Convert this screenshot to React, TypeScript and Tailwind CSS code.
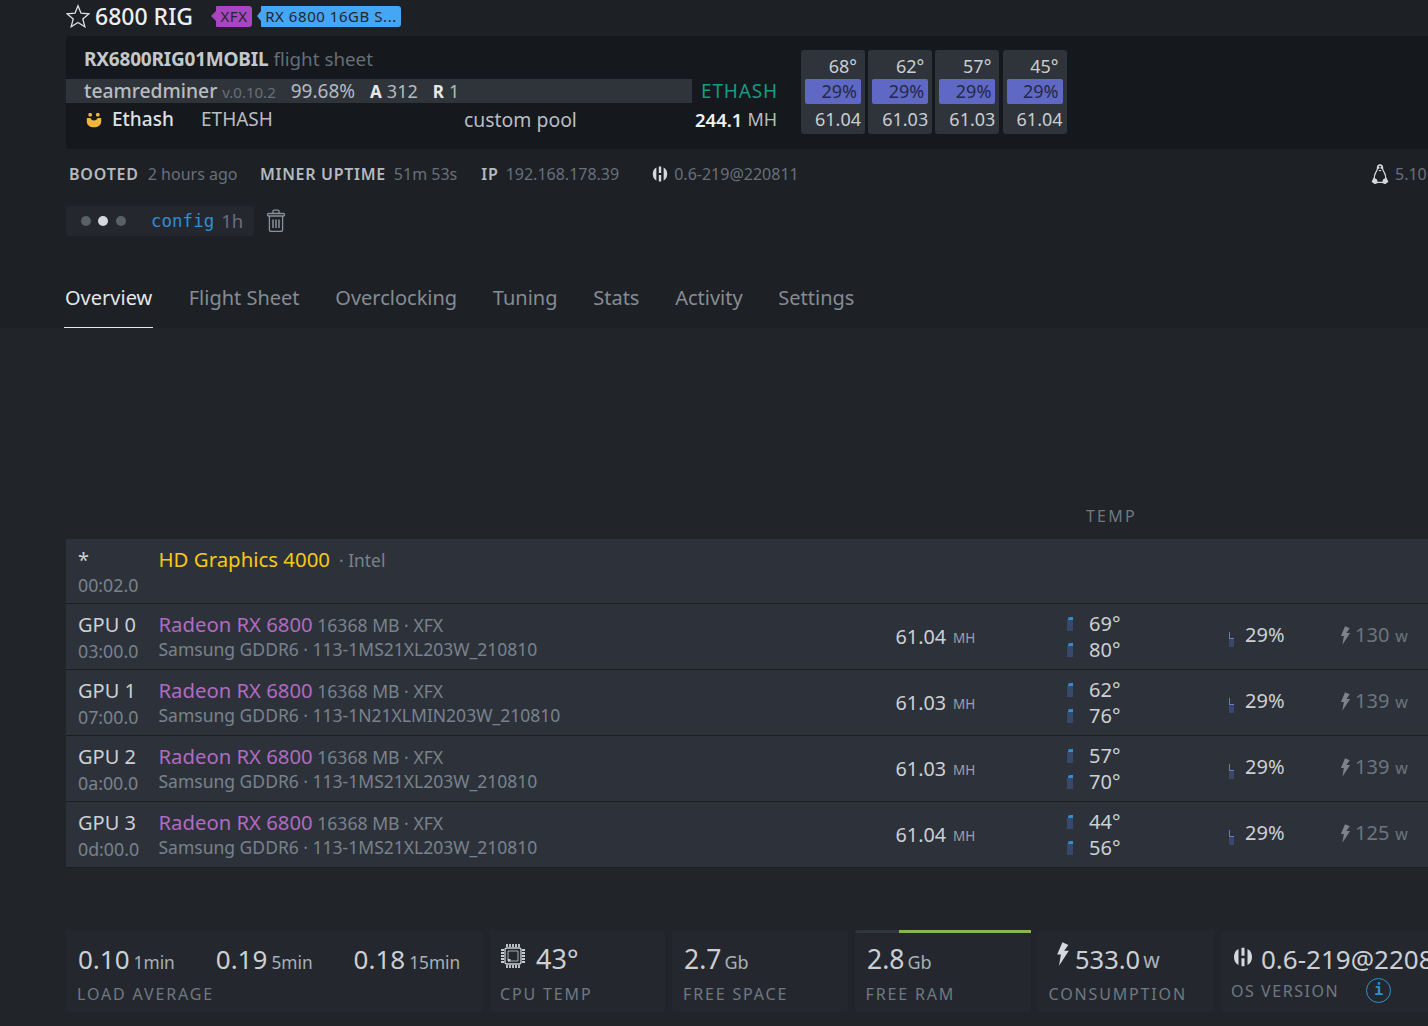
import React from "react";

const LogoH = ({ className }: { className: string }) => (
  <svg viewBox="0 0 16 16" className={className} fill="currentColor">
    <path d="M4.4 1.6C2.2 2.6.8 4.8.8 8s1.4 5.4 3.6 6.4Z" />
    <path d="M6.8.6h2.4V7H6.8ZM6.8 9h2.4v6.4H6.8Z" />
    <path d="M11.6 1.6c2.2 1 3.6 3.2 3.6 6.4s-1.4 5.4-3.6 6.4Z" />
  </svg>
);

const Bolt = ({ className }: { className: string }) => (
  <svg viewBox="0 0 12 20" className={className} fill="currentColor">
    <path d="M5.5 0 1 10.5h3.2L2.6 20 11 7.2H7L10.6 2.2 5.5 0Z" />
  </svg>
);

const Chip = () => (
  <svg viewBox="0 0 26 26" className="w-[26px] h-[26px] text-[#c9ced4]" fill="none" stroke="currentColor">
    <rect x="5" y="5" width="16" height="16" rx="2" strokeWidth="1.3" />
    <path d="M8 8h10v10H8Z" strokeWidth=".8" />
    <rect x="8" y="16" width="2.5" height="2.5" fill="currentColor" stroke="none" />
    <path d="M7 1v3M10 1v3M13 1v3M16 1v3M19 1v3M7 22v3M10 22v3M13 22v3M16 22v3M19 22v3M1 7h3M1 10h3M1 13h3M1 16h3M1 19h3M22 7h3M22 10h3M22 13h3M22 16h3M22 19h3" strokeWidth="1.8" />
  </svg>
);

const Tux = () => (
  <svg viewBox="0 0 18 20" className="w-[18px] h-[20px]" fill="none" stroke="#d5d8dc" strokeWidth="1.3">
    <path d="M9 1C7 1 6.4 2.6 6.4 4.4c0 1.6-.6 2.4-1.6 4C3.6 10.4 3 12.4 3.4 14.5" />
    <path d="M9 1c2 0 2.6 1.6 2.6 3.4 0 1.6.6 2.4 1.6 4 1.2 2 1.8 4 1.4 6.1" />
    <path d="M1.4 17.6 3 14.4l2.4 1.6.8 2.6-2.4.8ZM16.6 17.6 15 14.4l-2.4 1.6-.8 2.6 2.4.8ZM6.4 18.4h5.2" fill="#d5d8dc" />
    <path d="M7 2.8h1.4v2H7ZM9.6 2.8H11v2H9.6ZM7.4 6h3.2l-1.6 1.4Z" fill="#d5d8dc" stroke="none" />
  </svg>
);

const Smile = () => (
  <svg viewBox="0 0 16 16" className="w-4 h-4" fill="#f0b73d">
    <rect x="2.5" y="1" width="3.4" height="3.4" rx="1.2" />
    <rect x="10.1" y="1" width="3.4" height="3.4" rx="1.2" />
    <path d="M.8 6h3.6c.5 1.6 1.8 2.4 3.6 2.4s3.1-.8 3.6-2.4h3.6v3.4C15.2 13 12 15.2 8 15.2S.8 13 .8 9.4Z" />
  </svg>
);

const Trash = () => (
  <svg viewBox="0 0 20 24" className="w-5 h-6" fill="none" stroke="#8a9097" strokeWidth="1.3">
    <rect x="1.5" y="4.5" width="17" height="2.5" rx="1" />
    <path d="M7 4.5V2.2C7 1.6 7.5 1.2 8 1.2h4c.5 0 1 .4 1 1v2.3" />
    <path d="M3.4 7v13.4c0 1.2.8 2 2 2h9.2c1.2 0 2-.8 2-2V7" />
    <path d="M7 10.5v8.5M10 10.5v8.5M13 10.5v8.5" strokeWidth="1.5" />
  </svg>
);

const Star = () => (
  <svg viewBox="0 0 24 24" className="w-[24px] h-[24px]" fill="none" stroke="#dfe2e6" strokeWidth="1.3" strokeLinejoin="miter">
    <path d="M12 1.8 15 9.2l8 .6-6.2 5.1 2 7.8L12 18.4l-6.8 4.3 2-7.8L1 9.8l8-.6Z" />
  </svg>
);

const Tag = ({ bg, arrow, text, wide }: { bg: string; arrow: string; text: string; wide: string }) => (
  <span className="flex items-center">
    <span className={arrow} />
    <span className={`${bg} ${wide} h-[21px] rounded-r-[3px] rounded-l-[1px] text-[15px] leading-[21px] text-center text-[#22262c] tracking-[0.55px]`}>{text}</span>
  </span>
);

const Fan = ({ temp, fan, hash }: { temp: string; fan: string; hash: string }) => (
  <div className="w-[64px] h-[84px] bg-[#2f343b] rounded-[3px] flex flex-col items-stretch text-[18px] text-[#c9ced3]">
    <div className="h-[29px] pt-[4px] pr-[8px] text-right leading-[24px]">{temp}</div>
    <div className="h-[25px] mx-[4px] bg-[#5f68c4] rounded-[2px] text-right pr-[4px] text-[#242a47] leading-[25px]">{fan}</div>
    <div className="pr-[4px] pt-[1px] text-right leading-[28px]">{hash}</div>
  </div>
);

const Mini = () => (
  <span className="relative w-[5px] h-[15px] bg-[#39486a] block">
    <span className="absolute left-0 top-0 w-full h-[7px] border-l border-b border-[#6b74d8] bg-[#2d323a]" />
  </span>
);

const Bar = () => (
  <span className="relative w-[6px] h-[14px] bg-[#37496a] block">
    <span className="absolute left-[1px] top-0 w-[5px] h-[3px] bg-[#2f8fd0] rounded-tl-[3px]" />
    <span className="absolute left-0 top-0 w-[1px] h-[3px] bg-[#2d323a]" />
  </span>
);

const Row = ({ gpu, bus, mem, hash, t1, t2, w }: { gpu: string; bus: string; mem: string; hash: string; t1: string; t2: string; w: string }) => (
  <div className="h-[66px] flex border-b border-[#1b1e22] items-stretch">
    <div className="w-[92px] pl-[12px] pt-[8px] shrink-0">
      <div className="text-[20px] leading-[26px] text-[#ccd0d4]">{gpu}</div>
      <div className="text-[17.8px] leading-[23px] mt-[2px] text-[#79828c]">{bus}</div>
    </div>
    <div className="w-[737px] pt-[7px] shrink-0">
      <div className="leading-[26px] whitespace-nowrap pl-[0.5px]">
        <span className="text-[20.3px] text-[#b06bc1]">Radeon RX 6800</span>
        <span className="text-[17.6px] text-[#79828c]"> 16368 MB · XFX</span>
      </div>
      <div className="text-[17.5px] leading-[23px] -mt-[1px] pl-[0.5px] text-[#79828c] whitespace-nowrap">{mem}</div>
    </div>
    <div className="w-[172px] shrink-0 flex items-center text-[19.8px] text-[#ccd0d4] pl-[0.5px]">
      {hash}<span className="text-[13.5px] ml-[7px] mt-[3px] text-[#9aa1a8]">MH</span>
    </div>
    <div className="w-[162px] shrink-0 pt-[7px] flex flex-col">
      <div className="flex items-center h-[26px] gap-[16px]"><Bar /><span className="text-[20px] text-[#ccd0d4]">{t1}</span></div>
      <div className="flex items-center h-[26px] gap-[16px]"><Bar /><span className="text-[20px] text-[#ccd0d4]">{t2}</span></div>
    </div>
    <div className="w-[111px] shrink-0 flex items-center gap-[11px] text-[20px] text-[#ccd0d4]">
      <span className="mt-[6px]"><Mini /></span>
      <span className="-mt-[3px]">29%</span>
    </div>
    <div className="flex items-center text-[#6c757e] -mt-[3px] whitespace-nowrap">
      <Bolt className="w-[11px] h-[19px] mr-[4px] text-[#7c838a]" />
      <span className="text-[20px]">{w}</span>
      <span className="text-[16px] ml-[6px] mt-[2px]">w</span>
    </div>
  </div>
);

const Stat = ({ w, children }: { w: string; children: React.ReactNode }) => (
  <div className={`${w} shrink-0 h-[82px] bg-[#24282e] rounded-[3px]`}>{children}</div>
);

const Label = ({ children }: { children: React.ReactNode }) => (
  <span className="text-[16px] tracking-[1.85px] text-[#6f7983] leading-[24px]">{children}</span>
);

const tabs = ["Flight Sheet", "Overclocking", "Tuning", "Stats", "Activity", "Settings"];

export default function App() {
  return (
    <div className="w-[1428px] h-[1026px] overflow-hidden bg-[#212429]" style={{ fontFamily: '"Noto Sans", sans-serif' }}>
      <div className="h-[328px] bg-[#1d2025] pl-[66px] overflow-hidden">
        <div className="h-[36px] flex items-center pb-[4px]">
          <Star />
          <span className="ml-[5px] text-[23px] font-medium text-[#eceef0] leading-[30px]">6800 RIG</span>
          <span className="ml-[18px]"><Tag bg="bg-[#a846c2]" arrow="w-0 h-0 border-y-[5px] border-y-transparent border-r-[5px] border-r-[#a846c2]" text="XFX" wide="w-[36px]" /></span>
          <span className="ml-[5px]"><Tag bg="bg-[#44a6f5]" arrow="w-0 h-0 border-y-[5px] border-y-transparent border-r-[4px] border-r-[#44a6f5]" text="RX 6800 16GB S..." wide="w-[140px]" /></span>
        </div>

        <div className="h-[113px] bg-[#15181c] rounded-l-[3px] flex items-start">
          <div className="w-[735px] pt-[6px] shrink-0">
            <div className="pl-[18px] h-[34px] flex items-center whitespace-nowrap">
              <span className="text-[19px] font-bold tracking-[-0.2px] text-[#c4c8cc]">RX6800RIG01MOBIL</span>
              <span className="text-[18.8px] text-[#666e76] ml-[5px]">flight sheet</span>
            </div>
            <div className="flex items-center mt-[3px] -mb-[3px] relative -top-[2px]">
              <div className="w-[626px] h-[24px] bg-[#2f343b] pl-[18px] flex items-center whitespace-nowrap text-[#b5bac0]">
                <span className="text-[19.3px] font-medium text-[#b8bdc2]">teamredminer</span>
                <span className="text-[15px] text-[#687079] ml-[5px] mt-[2px]">v.0.10.2</span>
                <span className="text-[19px] ml-[15px]">99.68%</span>
                <span className="text-[17px] font-bold text-[#e6e8ea] ml-[15px]">A</span>
                <span className="text-[18px] ml-[5px]">312</span>
                <span className="text-[17px] font-bold text-[#e6e8ea] ml-[15px]">R</span>
                <span className="text-[18px] ml-[5px]">1</span>
              </div>
              <div className="ml-[9px] text-[19px] tracking-[0.85px] text-[#149c82]">ETHASH</div>
            </div>
            <div className="h-[30px] -mt-[2px] flex items-center whitespace-nowrap">
              <span className="ml-[20px]"><Smile /></span>
              <span className="ml-[10px] text-[19px] font-medium text-[#dfe2e5] w-[89px]">Ethash</span>
              <span className="text-[19px] text-[#b8bdc2] w-[263px]">ETHASH</span>
              <span className="text-[19.4px] text-[#b8bdc2] w-[231px]">custom pool</span>
              <span className="text-[18.5px] font-semibold text-[#eef0f1]">244.1</span>
              <span className="text-[18px] text-[#b8bdc2] ml-[5px]">MH</span>
            </div>
          </div>
          <div className="mt-[14px] flex gap-[3.2px]">
            <Fan temp="68°" fan="29%" hash="61.04" />
            <Fan temp="62°" fan="29%" hash="61.03" />
            <Fan temp="57°" fan="29%" hash="61.03" />
            <Fan temp="45°" fan="29%" hash="61.04" />
          </div>
        </div>

        <div className="h-[50px] flex items-center whitespace-nowrap pl-[3px] relative">
          <span className="text-[16px] font-semibold tracking-[0.8px] text-[#b5bac0]">BOOTED</span>
          <span className="text-[16px] ml-[9px] text-[#687079]">2 hours ago</span>
          <span className="text-[16px] font-semibold tracking-[0.7px] text-[#b5bac0] ml-[22.5px]">MINER UPTIME</span>
          <span className="text-[16px] ml-[8px] text-[#687079]">51m 53s</span>
          <span className="text-[16px] font-semibold tracking-[0.8px] text-[#b5bac0] ml-[24px]">IP</span>
          <span className="text-[16px] ml-[7px] text-[#687079]">192.168.178.39</span>
          <LogoH className="w-4 h-4 text-[#d5d8dc] ml-[33px] mr-[6px]" />
          <span className="text-[16px] text-[#687079]">0.6-219@220811</span>
          <span className="absolute left-[1305px] top-[13px] flex items-center gap-[6px]">
            <Tux />
            <span className="text-[16px] text-[#687079]">5.10.</span>
          </span>
        </div>

        <div className="flex items-center h-[30px] mt-[7px]">
          <div className="w-[188px] h-[30px] bg-[#24282e] rounded-[3px] flex items-center pl-[15px]">
            <span className="w-[10px] h-[10px] rounded-full bg-[#5a6067]" />
            <span className="w-[10px] h-[10px] rounded-full bg-[#d5d8dc] ml-[7px]" />
            <span className="w-[10px] h-[10px] rounded-full bg-[#5a6067] ml-[8px]" />
            <span className="ml-[25px] text-[17.5px] text-[#2f8fd0]" style={{ fontFamily: '"DejaVu Sans Mono", monospace' }}>config</span>
            <span className="ml-[7px] text-[18.5px] text-[#687079]">1h</span>
          </div>
          <span className="ml-[12px]"><Trash /></span>
        </div>

        <div className="flex mt-[37px] -ml-[2px] h-[55px] text-[20px] whitespace-nowrap">
          <div className="border-b border-[#e4e6e8] text-[#e4e6e8] h-[55px] leading-[50px] w-[89px] pl-[1px]">Overview</div>
          {tabs.map((t) => (
            <div key={t} className="ml-[35.7px] text-[#858c94] leading-[50px]">{t}</div>
          ))}
        </div>
      </div>

      <div className="pl-[66px]">
        <div className="h-[211px] flex flex-col justify-end pb-[11px]">
          <div className="pl-[1020px] text-[16px] tracking-[2.2px] text-[#6f7983] leading-[24px]">TEMP</div>
        </div>
        <div className="bg-[#2d323a]">
          <div className="h-[65px] flex border-b border-[#1b1e22]">
            <div className="w-[92px] pl-[12px] pt-[9px]">
              <div className="text-[20px] leading-[24px] text-[#ccd0d4]">*</div>
              <div className="text-[17.8px] leading-[23px] text-[#79828c] mt-[2px]">00:02.0</div>
            </div>
            <div className="pt-[5px] whitespace-nowrap leading-[30px] pl-[0.5px]">
              <span className="text-[20.4px] text-[#f6c915]">HD Graphics 4000</span>
              <span className="text-[17.4px] text-[#79828c] ml-[9px]">· Intel</span>
            </div>
          </div>
          <Row gpu="GPU 0" bus="03:00.0" mem="Samsung GDDR6 · 113-1MS21XL203W_210810" hash="61.04" t1="69°" t2="80°" w="130" />
          <Row gpu="GPU 1" bus="07:00.0" mem="Samsung GDDR6 · 113-1N21XLMIN203W_210810" hash="61.03" t1="62°" t2="76°" w="139" />
          <Row gpu="GPU 2" bus="0a:00.0" mem="Samsung GDDR6 · 113-1MS21XL203W_210810" hash="61.03" t1="57°" t2="70°" w="139" />
          <Row gpu="GPU 3" bus="0d:00.0" mem="Samsung GDDR6 · 113-1MS21XL203W_210810" hash="61.04" t1="44°" t2="56°" w="125" />
        </div>

        <div className="mt-[62px] flex gap-[7px] whitespace-nowrap">
          <Stat w="w-[416.5px]">
            <div className="flex pl-[12px] pt-[12px] h-[40px] items-baseline text-[#ccd0d4]">
              <span className="text-[26px] leading-[34px]">0.10</span><span className="text-[17.3px] ml-[4px] text-[#aab0b6]">1min</span>
              <span className="text-[26px] leading-[34px] ml-[41px]">0.19</span><span className="text-[17.3px] ml-[4px] text-[#aab0b6]">5min</span>
              <span className="text-[26px] leading-[34px] ml-[41px]">0.18</span><span className="text-[17.3px] ml-[4px] text-[#aab0b6]">15min</span>
            </div>
            <div className="pl-[11px] mt-[12px]"><Label>LOAD AVERAGE</Label></div>
          </Stat>
          <Stat w="w-[175.5px]">
            <div className="flex pl-[10.5px] pt-[12px] h-[40px] items-center text-[#ccd0d4]">
              <Chip /><span className="text-[27px] ml-[10px] mt-[5px] leading-[34px]">43°</span>
            </div>
            <div className="pl-[10.5px] mt-[12px]"><Label>CPU TEMP</Label></div>
          </Stat>
          <Stat w="w-[176px]">
            <div className="flex pl-[12px] pt-[12px] h-[40px] items-baseline text-[#ccd0d4]">
              <span className="text-[26.5px] leading-[34px]">2.7</span><span className="text-[18px] ml-[3px] text-[#aab0b6]">Gb</span>
            </div>
            <div className="pl-[11px] mt-[12px]"><Label>FREE SPACE</Label></div>
          </Stat>
          <Stat w="w-[176px] relative">
            <div className="absolute top-0 left-0 w-full h-[3px] bg-[#30353c] rounded-t-[3px]">
              <div className="ml-[44px] h-[3px] bg-[#85b84a]" />
            </div>
            <div className="flex pl-[12px] pt-[12px] h-[40px] items-baseline text-[#ccd0d4]">
              <span className="text-[26.5px] leading-[34px]">2.8</span><span className="text-[18px] ml-[3px] text-[#aab0b6]">Gb</span>
            </div>
            <div className="pl-[10.5px] mt-[12px]"><Label>FREE RAM</Label></div>
          </Stat>
          <Stat w="w-[176px]">
            <div className="flex pl-[18px] pt-[12px] h-[40px] items-center text-[#ccd0d4]">
              <Bolt className="w-[14px] h-[24px] -mt-[4px] text-[#d5d8dc]" />
              <span className="text-[25.5px] ml-[5px] mt-[5px] leading-[34px]">533.0</span><span className="text-[21px] ml-[3px] mt-[9px] text-[#aab0b6]">w</span>
            </div>
            <div className="pl-[10.5px] mt-[12px]"><Label>CONSUMPTION</Label></div>
          </Stat>
          <Stat w="w-[260px]">
            <div className="flex pl-[12px] pt-[12px] h-[40px] items-center text-[#ccd0d4]">
              <LogoH className="w-[20px] h-[20px] text-[#d5d8dc] mt-[2px]" />
              <span className="text-[26px] ml-[8px] mt-[6px] leading-[34px]">0.6-219@220811</span>
            </div>
            <div className="pl-[10px] mt-[8px] flex items-center">
              <span className="text-[16px] tracking-[1.55px] text-[#6f7983] leading-[24px]">OS VERSION</span>
              <span className="ml-[27px] w-[25px] h-[25px] rounded-full border border-[#2f8fd0] flex items-center justify-center text-[15px] font-bold text-[#2f8fd0]" style={{ fontFamily: '"DejaVu Sans Mono", monospace' }}>i</span>
            </div>
          </Stat>
        </div>
      </div>
    </div>
  );
}
